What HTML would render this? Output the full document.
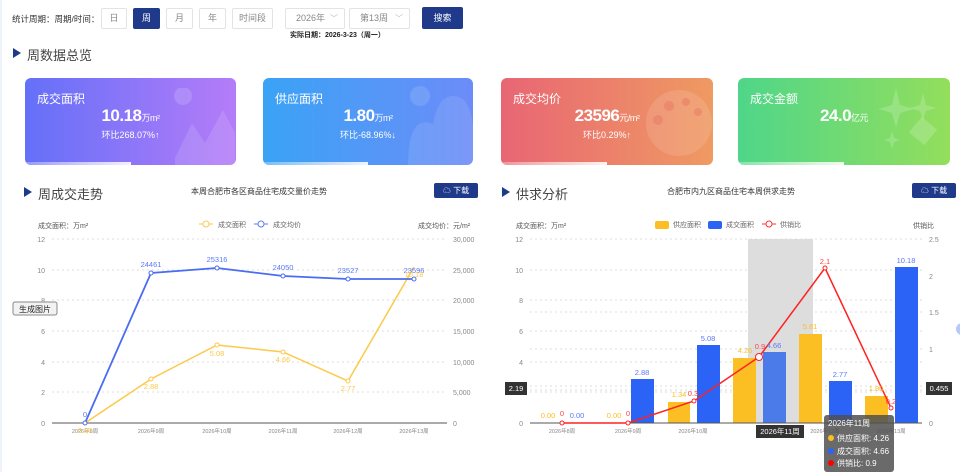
<!DOCTYPE html>
<html><head><meta charset="utf-8"><style>
*{margin:0;padding:0;box-sizing:border-box}
body{width:960px;height:472px;overflow:hidden;background:#fff;font-family:"Liberation Sans","Noto Sans CJK SC",sans-serif;position:relative;color:#333}
.a{position:absolute}
.btn{position:absolute;top:8px;height:21px;border:1px solid #e3e3e3;background:#fff;font-size:9px;color:#888;text-align:center;line-height:19px;border-radius:2px}
.sel{position:absolute;top:8px;height:21px;border:1px solid #e3e3e3;font-size:9px;color:#888;line-height:19px;padding-left:10px;border-radius:2px}
.sel:after{content:"﹀";position:absolute;right:6px;top:0;color:#bbb;font-size:8px}
.h{position:absolute;font-size:13px;color:#444}
.h:before{content:"";position:absolute;left:-14px;top:3px;border-left:8px solid #1f3a8a;border-top:5px solid transparent;border-bottom:5px solid transparent}
.card{position:absolute;top:78px;height:87px;border-radius:6px;color:#fff;overflow:hidden}
.card .t{position:absolute;left:12px;top:12px;font-size:12px}
.card .v{position:absolute;top:28px;width:100%;text-align:center;font-size:17px;font-weight:bold;letter-spacing:-0.5px}
.card .v small{font-size:9px;font-weight:normal}
.card .r{position:absolute;top:50px;width:100%;text-align:center;font-size:9px}
.card .bar{position:absolute;left:0;bottom:0;height:3px;width:50%;background:linear-gradient(90deg,rgba(255,255,255,.3),rgba(255,255,255,.9))}
.dl{position:absolute;top:183px;width:44px;height:15px;background:#1f3a8a;color:#fff;font-size:8px;line-height:15px;text-align:center;border-radius:2px}
.sub{position:absolute;top:186px;font-size:8px;color:#333}
</style></head><body>
<div class="a" style="left:0;top:0;width:2px;height:472px;background:#eef3fb"></div>
<div class="a" style="left:12px;top:13px;font-size:8.5px;color:#333">统计周期：周期/时间：</div>
<div class="btn" style="left:101px;width:26px">日</div>
<div class="btn" style="left:133px;width:27px;background:#1f3a8a;color:#fff;border-color:#1f3a8a">周</div>
<div class="btn" style="left:166px;width:27px">月</div>
<div class="btn" style="left:199px;width:27px">年</div>
<div class="btn" style="left:232px;width:41px">时间段</div>
<div class="sel" style="left:285px;width:60px">2026年</div>
<div class="sel" style="left:349px;width:61px">第13周</div>
<div class="a" style="left:422px;top:7px;width:41px;height:22px;background:#1f3a8a;color:#fff;font-size:9px;text-align:center;line-height:22px;border-radius:2px">搜索</div>
<div class="a" style="left:290px;top:30px;font-size:7px;font-weight:bold;color:#222">实际日期：2026-3-23（周一）</div>
<div class="h" style="left:27px;top:45px">周数据总览</div>

<div class="card" style="left:25px;width:211px;background:linear-gradient(90deg,#6470f8,#b57cf8)">
 <svg class="a" style="left:130px;top:10px" width="80" height="77"><circle cx="28" cy="8" r="9" fill="rgba(255,255,255,.15)"/><path d="M20 70 L37 35 L50 55 L68 22 L80 45 L80 77 L20 77Z" fill="rgba(255,255,255,.12)"/></svg>
 <div class="t">成交面积</div><div class="v">10.18<small>万m²</small></div><div class="r">环比268.07%↑</div><div class="bar"></div></div>
<div class="card" style="left:263px;width:210px;background:linear-gradient(90deg,#3aa3f6,#6c8cf8)">
 <svg class="a" style="left:135px;top:8px" width="75" height="79"><circle cx="22" cy="10" r="10" fill="rgba(255,255,255,.12)"/><path d="M10 79 Q10 28 35 38 Q40 10 55 10 Q72 10 75 40 L75 79Z" fill="rgba(255,255,255,.1)"/></svg>
 <div class="t">供应面积</div><div class="v">1.80<small>万m²</small></div><div class="r">环比-68.96%↓</div><div class="bar"></div></div>
<div class="card" style="left:501px;width:212px;background:linear-gradient(90deg,#e86674,#ef9a62)">
 <svg class="a" style="left:145px;top:10px" width="66" height="70"><circle cx="33" cy="35" r="33" fill="rgba(255,255,255,.12)"/><circle cx="23" cy="18" r="5" fill="rgba(232,120,100,.5)"/><circle cx="40" cy="14" r="4" fill="rgba(232,120,100,.5)"/><circle cx="52" cy="24" r="4" fill="rgba(232,120,100,.5)"/><circle cx="12" cy="32" r="5" fill="rgba(232,120,100,.5)"/></svg>
 <div class="t">成交均价</div><div class="v">23596<small>元/m²</small></div><div class="r">环比0.29%↑</div><div class="bar"></div></div>
<div class="card" style="left:738px;width:212px;background:linear-gradient(90deg,#4fd689,#93de5c)">
 <svg class="a" style="left:140px;top:5px" width="70" height="80" fill="rgba(255,255,255,.18)"><path d="M18 5 L22 22 L36 26 L22 30 L18 45 L14 30 L0 26 L14 22Z"/><path d="M45 10 L48 22 L58 25 L48 28 L45 38 L42 28 L32 25 L42 22Z"/><path d="M14 48 L16 55 L22 57 L16 59 L14 66 L12 59 L6 57 L12 55Z"/><rect x="35" y="38" width="20" height="20" transform="rotate(40 45 48)"/></svg>
 <div class="t">成交金额</div><div class="v">24.0<small>亿元</small></div><div class="bar"></div></div>

<div class="h" style="left:38px;top:184px">周成交走势</div>
<div class="sub" style="left:191px">本周合肥市各区商品住宅成交量价走势</div>
<div class="dl" style="left:434px">☁ 下载</div>
<div class="h" style="left:516px;top:184px">供求分析</div>
<div class="sub" style="left:667px">合肥市内九区商品住宅本周供求走势</div>
<div class="dl" style="left:912px">☁ 下载</div>

<svg class="a" style="left:0;top:0" width="960" height="472" font-family="Liberation Sans,Noto Sans CJK SC,sans-serif">
<g font-size="7" fill="#555">
<text x="38" y="228">成交面积：万m²</text><text x="418" y="228">成交均价：元/m²</text>
</g>
<g stroke="#ddd" stroke-dasharray="2,3">
<line x1="52" y1="239" x2="447" y2="239"/><line x1="52" y1="270" x2="447" y2="270"/><line x1="52" y1="300" x2="447" y2="300"/><line x1="52" y1="331" x2="447" y2="331"/><line x1="52" y1="362" x2="447" y2="362"/><line x1="52" y1="392" x2="447" y2="392"/>
</g>
<line x1="52" y1="423" x2="447" y2="423" stroke="#555"/>
<g font-size="7" fill="#888" text-anchor="end"><text x="45" y="242">12</text><text x="45" y="273">10</text><text x="45" y="303">8</text><text x="45" y="334">6</text><text x="45" y="365">4</text><text x="45" y="395">2</text><text x="45" y="426">0</text></g>
<g font-size="7" fill="#888"><text x="453" y="242">30,000</text><text x="453" y="273">25,000</text><text x="453" y="303">20,000</text><text x="453" y="334">15,000</text><text x="453" y="365">10,000</text><text x="453" y="395">5,000</text><text x="453" y="426">0</text></g>
<g font-size="5.5" fill="#888" text-anchor="middle"><text x="85" y="433">2026年8周</text><text x="151" y="433">2026年9周</text><text x="217" y="433">2026年10周</text><text x="283" y="433">2026年11周</text><text x="348" y="433">2026年12周</text><text x="414" y="433">2026年13周</text></g>
<g font-size="7"><line x1="199" y1="224" x2="213" y2="224" stroke="#fcc94a"/><circle cx="206" cy="224" r="3" fill="#fff" stroke="#fcc94a"/><text x="218" y="227" fill="#666">成交面积</text><line x1="254" y1="224" x2="268" y2="224" stroke="#5b7bf5"/><circle cx="261" cy="224" r="3" fill="#fff" stroke="#5b7bf5"/><text x="273" y="227" fill="#666">成交均价</text></g>
<polyline points="85,423 151,379 217,345 283,352 348,381 414,267" fill="none" stroke="#fcc94a" stroke-width="1.5"/>
<polyline points="85,423 151,273 217,268 283,276 348,279 414,279" fill="none" stroke="#4a6cf3" stroke-width="1.8"/>
<g fill="#fff" stroke-width="1"><circle cx="151" cy="379" r="2" stroke="#fcc94a"/><circle cx="217" cy="345" r="2" stroke="#fcc94a"/><circle cx="283" cy="352" r="2" stroke="#fcc94a"/><circle cx="348" cy="381" r="2" stroke="#fcc94a"/><circle cx="151" cy="273" r="2" stroke="#4a6cf3"/><circle cx="217" cy="268" r="2" stroke="#4a6cf3"/><circle cx="283" cy="276" r="2" stroke="#4a6cf3"/><circle cx="348" cy="279" r="2" stroke="#4a6cf3"/><circle cx="414" cy="279" r="2" stroke="#4a6cf3"/><circle cx="85" cy="423" r="2" stroke="#4a6cf3"/></g>
<g font-size="7.5" fill="#5b7bf5" text-anchor="middle"><text x="85" y="417">0</text><text x="151" y="267">24461</text><text x="217" y="262">25316</text><text x="283" y="270">24050</text><text x="348" y="273">23527</text><text x="414" y="273">23596</text></g>
<g font-size="7.5" fill="#fcc94a" text-anchor="middle"><text x="85" y="433">0.00</text><text x="151" y="389">2.88</text><text x="217" y="356">5.08</text><text x="283" y="362">4.66</text><text x="348" y="391">2.77</text><text x="414" y="277">10.18</text></g>
<rect x="13" y="302" width="44" height="13" rx="2" fill="#f2f2f2" stroke="#888"/><text x="35" y="312" font-size="8" fill="#222" text-anchor="middle">生成图片</text>

<g font-size="7" fill="#555"><text x="516" y="228">成交面积：万m²</text><text x="913" y="228">供销比</text></g>
<rect x="655" y="221" width="14" height="8" rx="2" fill="#fbbf24"/><text x="673" y="227" font-size="7" fill="#666">供应面积</text>
<rect x="708" y="221" width="14" height="8" rx="2" fill="#2b63f6"/><text x="726" y="227" font-size="7" fill="#666">成交面积</text>
<line x1="762" y1="224" x2="776" y2="224" stroke="#f33"/><circle cx="769" cy="224" r="3" fill="#fff" stroke="#f33"/><text x="780" y="227" font-size="7" fill="#666">供销比</text>
<rect x="748" y="239" width="65" height="184" fill="#ddd"/>
<g stroke="#ddd" stroke-dasharray="2,3">
<line x1="530" y1="239" x2="922" y2="239"/><line x1="530" y1="270" x2="922" y2="270"/><line x1="530" y1="300" x2="922" y2="300"/><line x1="530" y1="312" x2="922" y2="312"/><line x1="530" y1="331" x2="922" y2="331"/><line x1="530" y1="349" x2="922" y2="349"/><line x1="530" y1="362" x2="922" y2="362"/><line x1="530" y1="386" x2="922" y2="386"/><line x1="530" y1="390" x2="922" y2="390"/><line x1="530" y1="392" x2="922" y2="392"/>
</g>
<g font-size="7" fill="#888" text-anchor="end"><text x="523" y="242">12</text><text x="523" y="273">10</text><text x="523" y="303">8</text><text x="523" y="334">6</text><text x="523" y="365">4</text><text x="523" y="426">0</text></g>
<g font-size="7" fill="#888"><text x="929" y="242">2.5</text><text x="929" y="279">2</text><text x="929" y="315">1.5</text><text x="929" y="352">1</text><text x="929" y="426">0</text></g>
<g fill="#fbbf24"><rect x="668" y="402" width="22" height="21"/><rect x="733" y="358" width="23" height="65"/><rect x="799" y="334" width="23" height="89"/><rect x="865" y="396" width="23" height="27"/></g>
<g fill="#2b63f6"><rect x="631" y="379" width="23" height="44"/><rect x="697" y="345" width="23" height="78"/><rect x="763" y="352" width="23" height="71" fill="#4a7be8"/><rect x="829" y="381" width="23" height="42"/><rect x="895" y="267" width="23" height="156"/></g>
<line x1="530" y1="423" x2="922" y2="423" stroke="#555"/>
<polyline points="562,423 628,423 694,401 759,357 825,268 891,408" fill="none" stroke="#f22" stroke-width="1.5"/>
<g fill="#fff" stroke="#f22"><circle cx="562" cy="423" r="2"/><circle cx="628" cy="423" r="2"/><circle cx="694" cy="401" r="2"/><circle cx="759" cy="357" r="3.5"/><circle cx="825" cy="268" r="2"/><circle cx="891" cy="408" r="2"/></g>
<g font-size="7.5" text-anchor="middle"><g fill="#fbbf24"><text x="548" y="418">0.00</text><text x="614" y="418">0.00</text><text x="679" y="397">1.34</text><text x="745" y="353">4.26</text><text x="810" y="329">5.81</text><text x="876" y="391">1.80</text></g>
<g fill="#5b7bf5"><text x="577" y="418">0.00</text><text x="642" y="375">2.88</text><text x="708" y="341">5.08</text><text x="774" y="348">4.66</text><text x="840" y="377">2.77</text><text x="906" y="263">10.18</text></g>
<g fill="#f44"><text x="562" y="416">0</text><text x="628" y="416">0</text><text x="693" y="396">0.3</text><text x="760" y="349">0.9</text><text x="825" y="264">2.1</text><text x="891" y="404">0.2</text></g></g>
<g font-size="5.5" fill="#888" text-anchor="middle"><text x="562" y="433">2026年8周</text><text x="628" y="433">2026年9周</text><text x="693" y="433">2026年10周</text><text x="825" y="433">2026年12周</text><text x="891" y="433">2026年13周</text></g>
<rect x="505" y="382" width="22" height="13" fill="#333"/><text x="516" y="391" font-size="7.5" fill="#fff" text-anchor="middle">2.19</text>
<rect x="926" y="382" width="26" height="13" fill="#333"/><text x="939" y="391" font-size="7.5" fill="#fff" text-anchor="middle">0.455</text>
<rect x="756" y="425" width="48" height="13" fill="#333"/><text x="780" y="434" font-size="7.5" fill="#fff" text-anchor="middle">2026年11周</text>
<rect x="824" y="415" width="70" height="57" rx="3" fill="rgba(80,80,80,.85)"/>
<g font-size="8" fill="#fff"><text x="828" y="426">2026年11周</text><circle cx="831" cy="438" r="3" fill="#fbbf24"/><text x="837" y="441">供应面积: 4.26</text><circle cx="831" cy="451" r="3" fill="#2b63f6"/><text x="837" y="454">成交面积: 4.66</text><circle cx="831" cy="463" r="3" fill="#f00"/><text x="837" y="466">供销比: 0.9</text></g>
<circle cx="962" cy="329" r="6" fill="#b8c8f8"/>
</svg>
</body></html>
